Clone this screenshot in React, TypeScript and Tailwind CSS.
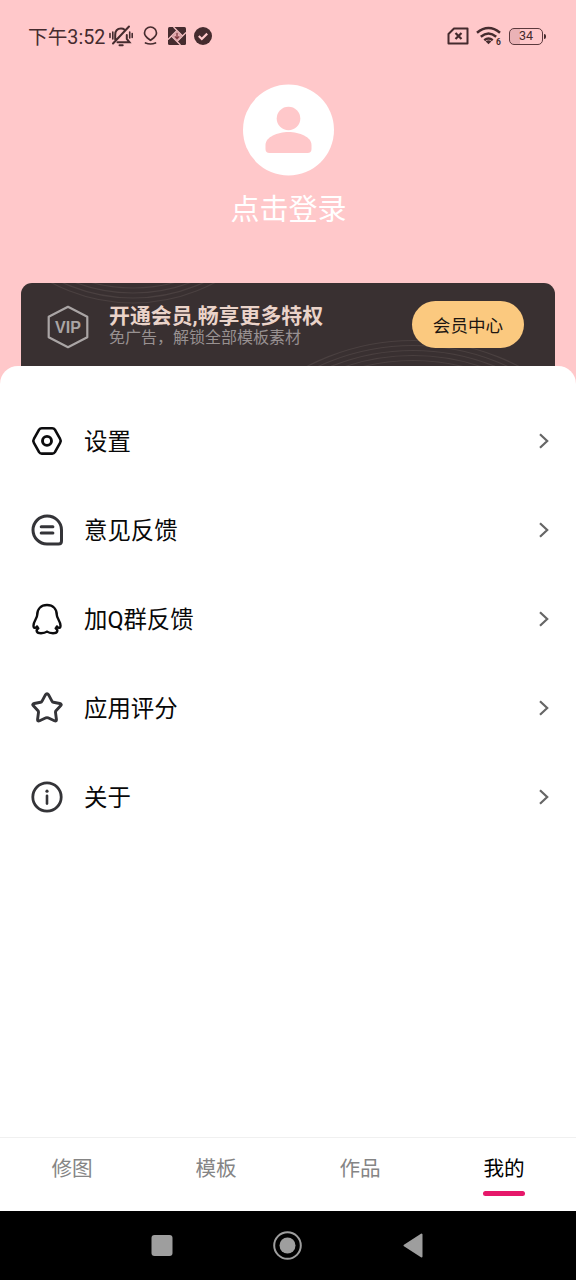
import type { ReactNode } from "react";

type MenuItem = { label: string; icon: ReactNode };

const menu: MenuItem[] = [
  { label: "设置", icon: <SettingsIcon /> },
  { label: "意见反馈", icon: <FeedbackIcon /> },
  { label: "加Q群反馈", icon: <PenguinIcon /> },
  { label: "应用评分", icon: <StarIcon /> },
  { label: "关于", icon: <InfoIcon /> },
];

const tabs = ["修图", "模板", "作品", "我的"];

function SettingsIcon() {
  return (
    <svg width="32" height="32" viewBox="0 0 32 32" fill="none" stroke="#0c0c0e" strokeWidth="2.6" strokeLinejoin="round">
      <path d="M10.8 3.2h10.4q1.8 0 2.7 1.5l5.2 9.2q1.2 2 0 4l-5.2 9.2q-.9 1.5-2.7 1.5H10.8q-1.8 0-2.7-1.5L2.9 17.9q-1.2-2 0-4l5.2-9.2q.9-1.5 2.7-1.5Z" />
      <circle cx="16" cy="15.9" r="4.5" strokeWidth="2.9" />
    </svg>
  );
}

function FeedbackIcon() {
  return (
    <svg width="32" height="32" viewBox="0 0 32 32" fill="none" stroke="#343438" strokeWidth="3" strokeLinecap="round" strokeLinejoin="round">
      <path d="M16 2A14 14 0 0 0 16 30H27.500Q30.500 30 30.500 27V16A14.300 14 0 0 0 16 2Z" />
      <path d="M10.200 12.800h11.700M10.200 18.900h11.700" />
    </svg>
  );
}

function PenguinIcon() {
  return (
    <svg width="32" height="32" viewBox="0 0 32 32" fill="none" stroke="#0c0c0e" strokeWidth="2.4" strokeLinecap="round" strokeLinejoin="round">
      <path d="M16 2C10 2 6.200 6 6.200 12C6.200 15 2.500 18.500 2.500 22.500C2.500 25.500 4.500 25.500 6.200 23.600M16 2C22 2 25.800 6 25.800 12C25.800 15 29.500 18.500 29.500 22.500C29.500 25.500 27.500 25.500 25.800 23.600" />
      <path d="M5.800 23.800L7.300 25.300C4.300 27.500 5.600 30.200 10 30.200Q13.800 30.200 16 28.600Q18.200 30.200 22 30.200C26.400 30.200 27.700 27.500 24.700 25.300L26.200 23.800" />
    </svg>
  );
}

function StarIcon() {
  return (
    <svg width="32" height="32" viewBox="0 0 32 32" fill="none" stroke="#343438" strokeWidth="2.900" strokeLinejoin="round">
      <path d="M17.600 2.900l3.500 6.500q.4.800 1.300.9l6.400 1.200q2.400.6.800 2.300l-4.600 5q-.6.700-.5 1.600l.9 6.900q.2 2.500-2 1.500l-6.400-3q-1-.4-2 0l-6.400 3q-2.200 1-2-1.500l.9-6.900q.1-.9-.5-1.600l-4.600-5q-1.600-1.700.8-2.300l6.400-1.200q.9-.1 1.300-.9L14.400 2.900q1.600-2.400 3.200 0Z" />
    </svg>
  );
}

function InfoIcon() {
  return (
    <svg width="32" height="32" viewBox="0 0 32 32" fill="none" stroke="#343438" strokeWidth="2.800" strokeLinecap="round">
      <circle cx="16" cy="16" r="14.200" />
      <path d="M16 14.800v7.800" strokeWidth="2.600" />
      <circle cx="16" cy="10.200" r="1.600" fill="#343438" stroke="none" />
    </svg>
  );
}

function StatusBar() {
  return (
    <div className="flex h-[72px] items-center pl-7 pr-[30px] text-[#452b2e]">
      <span className="pt-[3px] text-[19.7px] leading-none">下午3:52</span>
      {/* muted bell */}
      <svg className="ml-1" width="24" height="24" viewBox="0 0 24 24" fill="none" stroke="currentColor" strokeWidth="2" strokeLinecap="round">
        <path d="M8.500 18.300h12L17.800 15V11M6.200 15.500V11C6.200 7 8.500 4.500 12 4.500c1.500 0 2.700.4 3.700 1.200M4 19.500L20 2.500M10.500 21.300h3.200" />
        <path d="M1 9.500v4M3.800 8v7M20.700 8v6M23.200 9.500v4" strokeWidth="1.600" />
      </svg>
      {/* location pin */}
      <svg className="ml-[10px]" width="15" height="20" viewBox="0 0 15 20" fill="none" stroke="currentColor" strokeWidth="1.700" strokeLinecap="round">
        <path d="M7.500 14.300C5.500 12.800 1.500 10.700 1.500 7a6 6 0 0 1 12 0c0 3.700-4 5.800-6 7.300ZM2.500 17q5 2 10 0" />
      </svg>
      {/* pinwheel app badge */}
      <svg className="ml-[9px]" width="20" height="20" viewBox="0 0 20 20">
        <rect x="1" y="1" width="18" height="18" rx="1.500" fill="currentColor" />
        <path d="M6.500 1L15.500 10M19 6.500L10 15.500M13.500 19L4.500 10M1 13.500L10 4.500" stroke="#f7c0c3" strokeWidth="1.300" fill="none" />
        <path d="M10 5.500L14.500 10L10 14.500L5.500 10Z" fill="#e9adb1" />
        <path d="M10 7v5.500M7.800 10.400l2.200 2.200 2.200-2.200" stroke="#7d3a40" strokeWidth="1.300" fill="none" />
      </svg>
      <svg className="ml-[7px]" width="18" height="18" viewBox="0 0 18 18">
        <circle cx="9" cy="9" r="9" fill="currentColor" />
        <path d="M4.800 9l3 3 5.400-5.400" fill="none" stroke="#ffc8ca" strokeWidth="2.200" />
      </svg>

      <div className="ml-auto flex items-center">
        <svg width="22" height="18" viewBox="0 0 22 18" fill="none" stroke="currentColor" strokeWidth="2">
          <path d="M7 1.500H20.500V16.500H1.500V7Z" strokeLinejoin="round" />
          <path d="M8.500 6l6 6M14.500 6l-6 6" strokeWidth="2.200" />
        </svg>
        <svg className="ml-[7px]" width="26" height="20" viewBox="0 0 26 20" fill="none" stroke="currentColor" strokeWidth="2.500">
          <path d="M1 6.700Q12.500-2.800 24 6.700M4.800 10.700Q12.500 4.300 20.200 10.700M8.300 14.200Q12.500 10.800 16.700 14.200" />
          <path d="M9.700 15.500Q12.500 13.200 15.300 15.500L12.500 18.200Z" fill="currentColor" stroke="none" />
          <text x="20" y="18.500" fontSize="8.500" fontWeight="700" fontFamily="Roboto, sans-serif" fill="currentColor" stroke="none">6</text>
        </svg>
        <div className="ml-[7px] flex h-[17px] w-[34px] items-center justify-center rounded-[5px] border-[1.5px] border-[#5b393d] bg-linear-to-r from-[#eab2b6] from-30% to-transparent to-30% pt-px text-[12.5px] leading-none">
          34
        </div>
        <div className="ml-px h-[5px] w-[2px] rounded-r bg-[#452b2e]" />
      </div>
    </div>
  );
}

function VipCard() {
  return (
    <div className="relative mx-[21px] flex h-[83px] items-start overflow-hidden rounded-t-[11px] bg-[#393031]">
      {/* decorative rings */}
      <svg className="absolute inset-0" width="534" height="83" viewBox="0 0 534 83" fill="none" stroke="#4a4040" strokeWidth="1.200">
        <circle cx="112" cy="-154" r="174" />
        <circle cx="112" cy="-154" r="169" />
        <circle cx="112" cy="-154" r="164" />
        <circle cx="112" cy="-154" r="159" />
        <circle cx="392" cy="287" r="229.500" />
        <circle cx="392" cy="287" r="224.500" />
        <circle cx="392" cy="287" r="219.500" />
        <circle cx="392" cy="287" r="214.500" />
        <circle cx="392" cy="287" r="209.500" />
      </svg>
      <svg className="relative ml-[25px] mt-[22px]" width="44" height="44" viewBox="0 0 44 44">
        <path d="M22 1.800L41.300 11.700V32.300L22 42.200L2.700 32.300V11.700Z" fill="none" stroke="#aaa5a5" strokeWidth="2.200" strokeLinejoin="round" />
        <text x="22" y="28" textAnchor="middle" fontSize="16" fontWeight="700" fontFamily="'Liberation Sans', sans-serif" fill="#aaa5a5">VIP</text>
      </svg>
      <div className="relative ml-[19px] mt-[21px]">
        <div className="text-[20.9px] font-bold leading-[25px] text-[#ead3c9]">开通会员,畅享更多特权</div>
        <div className="text-[16px] leading-[17px] text-[#989191]">免广告，解锁全部模板素材</div>
      </div>
      <button className="relative ml-auto mr-[31px] mt-[18px] h-[47px] w-[112px] rounded-full bg-[#fbc97f] pt-[3px] text-[17.6px] text-[#1d1611]">
        会员中心
      </button>
    </div>
  );
}

function SystemNav() {
  return (
    <div className="flex h-[69px] items-center justify-center gap-[97px] bg-black">
      <svg width="26" height="32" viewBox="0 0 26 32">
        <rect x="1.500" y="5" width="21" height="21" rx="3" fill="#9e9e9e" />
      </svg>
      <svg width="30" height="32" viewBox="0 0 30 32">
        <circle cx="14.500" cy="15.500" r="13.300" fill="none" stroke="#9e9e9e" strokeWidth="2" />
        <circle cx="14.500" cy="15.500" r="8" fill="#9e9e9e" />
      </svg>
      <svg width="26" height="32" viewBox="0 0 26 32">
        <path d="M4.500 15.500L21.500 4.500V26.500Z" fill="#9e9e9e" stroke="#9e9e9e" strokeWidth="2" strokeLinejoin="round" />
      </svg>
    </div>
  );
}

export default function App() {
  const active = "我的";

  return (
    <div className="flex h-[1280px] w-[576px] flex-col overflow-hidden bg-[#ffc8ca] font-['Roboto','Noto_Sans_CJK_SC',sans-serif]">
      <StatusBar />

      <div className="flex h-[211px] flex-col items-center pt-3">
        <svg width="92" height="92" viewBox="0 0 92 92">
          <circle cx="46.500" cy="46" r="45.500" fill="#fff" />
          <circle cx="46.500" cy="34.500" r="11.800" fill="#ffc8ca" />
          <path d="M23.500 61C23.500 53 35.500 48 46.500 48S69.500 53 69.500 61V65Q69.500 69 65.500 69H27.500Q23.500 69 23.500 65Z" fill="#ffc8ca" />
        </svg>
        <div className="mt-[14px] pl-px text-[29px] leading-10 text-white">点击登录</div>
      </div>

      <VipCard />

      <div className="flex-1 rounded-t-[18px] bg-white pt-[30px]">
        {menu.map(item => (
          <div key={item.label} className="flex h-[89px] items-center pl-[31px] pr-[26px]">
            {item.icon}
            <span className="ml-[21px] pt-[5px] text-[23.4px] text-[#080808]">{item.label}</span>
            <svg className="ml-auto" width="12" height="18" viewBox="0 0 12 18" fill="none" stroke="#666" strokeWidth="2.200">
              <path d="M2 2.200L9.200 9L2 15.800" />
            </svg>
          </div>
        ))}
      </div>

      <div className="grid h-[74px] grid-cols-4 border-t border-[#f0f0f0] bg-white">
        {tabs.map(tab => (
          <div key={tab} className="flex flex-col items-center pt-[15px]">
            <span className={tab === active ? "text-[20.6px] leading-8 text-black" : "text-[20.6px] leading-8 text-[#858585]"}>
              {tab}
            </span>
            {tab === active && <div className="mt-[6px] h-[5px] w-[42px] rounded-full bg-[#e6186a]" />}
          </div>
        ))}
      </div>

      <SystemNav />
    </div>
  );
}
